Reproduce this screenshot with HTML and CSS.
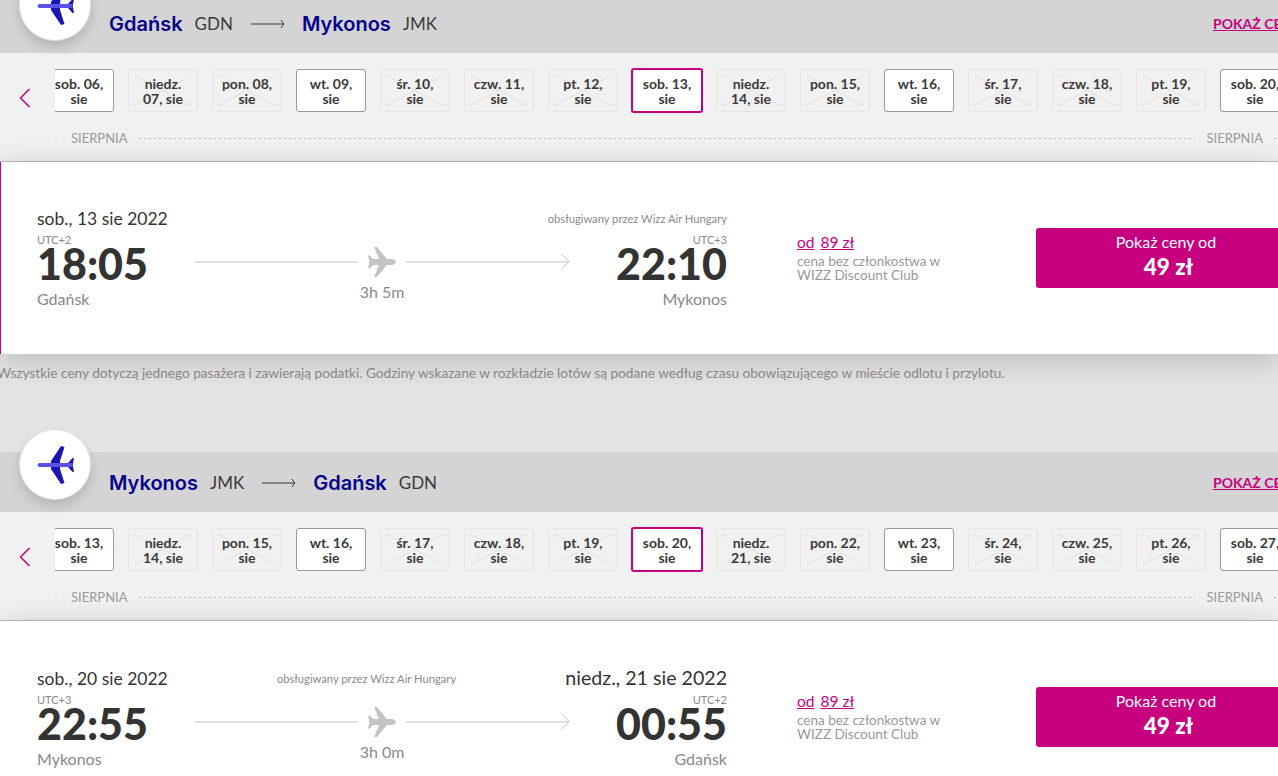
FILE: index.html
```html
<!DOCTYPE html>
<html lang="pl">
  <head>
    <meta charset="UTF-8" />
    <meta name="viewport" content="width=device-width, initial-scale=1.0" />
    <title>Wybierz lot</title>
    <link rel="stylesheet" href="styles.css">
  </head>
  <body>
    <main class="flight-list">
      <section class="flight-section flight-section-first">
        <header class="route-bar">
          <div class="route-logo">
            <svg width="38" height="38" viewBox="0 0 38 38">
              <path fill="#1c14b4" d="M15 15 L25 0 L28.500 1 L24 15 L24 23 L28.500 37 L25 38 L15 23 Z" />
              <path fill="#1c14b4" d="M32 17 L36.500 12 L38 12.500 L37 17 L37 21 L38 25.500 L36.500 26 L32 21 Z" />
              <path fill="#5a52e6" d="M3 17 Q0 19 3 21 L36 21 Q38 19 36 17 Z" />
            </svg>
          </div>
          <h2 class="route-title">
            <span class="route-city">Gdańsk</span><span class="route-code">GDN</span>
            <svg class="route-arrow" width="34" height="10" viewBox="0 0 34 10"><path d="M0 5 H33 M30 1 Q31 3 33 5 Q31 7 30 9" fill="none" stroke="#333" stroke-width="1" /></svg>
            <span class="route-city">Mykonos</span><span class="route-code">JMK</span>
          </h2>
          <a class="show-prices" href="#">POKAŻ CENY</a>
        </header>
        <div class="date-row">
          <button class="date-prev"><svg width="12" height="20" viewBox="0 0 12 20"><path d="M10.5 1 L1.5 10 L10.5 19" fill="none" stroke="#c6007e" stroke-width="1.5" /></svg></button>
          <div class="date-scroll">
            <div class="date-days">
              <a class="day">sob. 06,<br />sie</a>
              <a class="day day-off">niedz.<br />07, sie</a>
              <a class="day day-off">pon. 08,<br />sie</a>
              <a class="day">wt. 09,<br />sie</a>
              <a class="day day-off">śr. 10,<br />sie</a>
              <a class="day day-off">czw. 11,<br />sie</a>
              <a class="day day-off">pt. 12,<br />sie</a>
              <a class="day day-selected">sob. 13,<br />sie</a>
              <a class="day day-off">niedz.<br />14, sie</a>
              <a class="day day-off">pon. 15,<br />sie</a>
              <a class="day">wt. 16,<br />sie</a>
              <a class="day day-off">śr. 17,<br />sie</a>
              <a class="day day-off">czw. 18,<br />sie</a>
              <a class="day day-off">pt. 19,<br />sie</a>
              <a class="day">sob. 20,<br />sie</a>
            </div>
            <div class="month-row">
              <span class="month-dots month-dots-short"></span>
              <span class="month-name">SIERPNIA</span>
              <span class="month-dots"></span>
              <span class="month-name">SIERPNIA</span>
              <span class="month-dots month-dots-end"></span>
            </div>
          </div>
        </div>
        <article class="flight-card flight-card-active">
          <div class="flight-main">
            <div class="flight-top">
              <div class="flight-date">sob., 13 sie 2022</div>
              <div class="flight-operator">obsługiwany przez Wizz Air Hungary</div>
            </div>
            <div class="flight-times">
              <div class="flight-point">
                <div class="flight-utc">UTC+2</div>
                <div class="flight-time">18:05</div>
                <div class="flight-city">Gdańsk</div>
              </div>
              <div class="flight-route">
                <div class="route-line">
                  <span class="line"></span>
                  <svg width="28" height="30" viewBox="0 0 28 30"><path fill="#c4c4c4" d="M28 15 Q27 12 23 12 L19 12 L9 0 L6 0 L11 12 L5 12 L2 8.500 L0 8.500 L1.500 15 L0 21.500 L2 21.500 L5 18 L11 18 L6 30 L9 30 L19 18 L23 18 Q27 18 28 15 Z" /></svg>
                  <span class="line line-arrow"></span>
                </div>
                <div class="flight-duration">3h 5m</div>
              </div>
              <div class="flight-point flight-point-end">
                <div class="flight-utc">UTC+3</div>
                <div class="flight-time">22:10</div>
                <div class="flight-city">Mykonos</div>
              </div>
            </div>
          </div>
          <div class="flight-club">
            <div class="club-price"><a href="#">od</a> <a href="#">89 zł</a></div>
            <div class="club-note">cena bez członkostwa w<br />WIZZ Discount Club</div>
          </div>
          <a class="price-button" href="#">
            <span class="price-label">Pokaż ceny od</span>
            <strong class="price-value">49 zł</strong>
          </a>
        </article>
      </section>

      <p class="price-note">Wszystkie ceny dotyczą jednego pasażera i zawierają podatki. Godziny wskazane w rozkładzie lotów są podane według czasu obowiązującego w mieście odlotu i przylotu.</p>

      <section class="flight-section">
        <header class="route-bar">
          <div class="route-logo">
            <svg width="38" height="38" viewBox="0 0 38 38">
              <path fill="#1c14b4" d="M15 15 L25 0 L28.500 1 L24 15 L24 23 L28.500 37 L25 38 L15 23 Z" />
              <path fill="#1c14b4" d="M32 17 L36.500 12 L38 12.500 L37 17 L37 21 L38 25.500 L36.500 26 L32 21 Z" />
              <path fill="#5a52e6" d="M3 17 Q0 19 3 21 L36 21 Q38 19 36 17 Z" />
            </svg>
          </div>
          <h2 class="route-title">
            <span class="route-city">Mykonos</span><span class="route-code">JMK</span>
            <svg class="route-arrow" width="34" height="10" viewBox="0 0 34 10"><path d="M0 5 H33 M30 1 Q31 3 33 5 Q31 7 30 9" fill="none" stroke="#333" stroke-width="1" /></svg>
            <span class="route-city">Gdańsk</span><span class="route-code">GDN</span>
          </h2>
          <a class="show-prices" href="#">POKAŻ CENY</a>
        </header>
        <div class="date-row">
          <button class="date-prev"><svg width="12" height="20" viewBox="0 0 12 20"><path d="M10.5 1 L1.5 10 L10.5 19" fill="none" stroke="#c6007e" stroke-width="1.5" /></svg></button>
          <div class="date-scroll">
            <div class="date-days">
              <a class="day">sob. 13,<br />sie</a>
              <a class="day day-off">niedz.<br />14, sie</a>
              <a class="day day-off">pon. 15,<br />sie</a>
              <a class="day">wt. 16,<br />sie</a>
              <a class="day day-off">śr. 17,<br />sie</a>
              <a class="day day-off">czw. 18,<br />sie</a>
              <a class="day day-off">pt. 19,<br />sie</a>
              <a class="day day-selected">sob. 20,<br />sie</a>
              <a class="day day-off">niedz.<br />21, sie</a>
              <a class="day day-off">pon. 22,<br />sie</a>
              <a class="day">wt. 23,<br />sie</a>
              <a class="day day-off">śr. 24,<br />sie</a>
              <a class="day day-off">czw. 25,<br />sie</a>
              <a class="day day-off">pt. 26,<br />sie</a>
              <a class="day">sob. 27,<br />sie</a>
            </div>
            <div class="month-row">
              <span class="month-dots month-dots-short"></span>
              <span class="month-name">SIERPNIA</span>
              <span class="month-dots"></span>
              <span class="month-name">SIERPNIA</span>
              <span class="month-dots month-dots-end"></span>
            </div>
          </div>
        </div>
        <article class="flight-card">
          <div class="flight-main">
            <div class="flight-top">
              <div class="flight-date">sob., 20 sie 2022</div>
              <div class="flight-operator">obsługiwany przez Wizz Air Hungary</div>
              <div class="flight-date flight-date-next">niedz., 21 sie 2022</div>
            </div>
            <div class="flight-times">
              <div class="flight-point">
                <div class="flight-utc">UTC+3</div>
                <div class="flight-time">22:55</div>
                <div class="flight-city">Mykonos</div>
              </div>
              <div class="flight-route">
                <div class="route-line">
                  <span class="line"></span>
                  <svg width="28" height="30" viewBox="0 0 28 30"><path fill="#c4c4c4" d="M28 15 Q27 12 23 12 L19 12 L9 0 L6 0 L11 12 L5 12 L2 8.500 L0 8.500 L1.500 15 L0 21.500 L2 21.500 L5 18 L11 18 L6 30 L9 30 L19 18 L23 18 Q27 18 28 15 Z" /></svg>
                  <span class="line line-arrow"></span>
                </div>
                <div class="flight-duration">3h 0m</div>
              </div>
              <div class="flight-point flight-point-end">
                <div class="flight-utc">UTC+2</div>
                <div class="flight-time">00:55</div>
                <div class="flight-city">Gdańsk</div>
              </div>
            </div>
          </div>
          <div class="flight-club">
            <div class="club-price"><a href="#">od</a> <a href="#">89 zł</a></div>
            <div class="club-note">cena bez członkostwa w<br />WIZZ Discount Club</div>
          </div>
          <a class="price-button" href="#">
            <span class="price-label">Pokaż ceny od</span>
            <strong class="price-value">49 zł</strong>
          </a>
        </article>
      </section>
    </main>
  </body>
</html>
```

FILE: styles.css
```css
* {
  box-sizing: border-box;
}
html,
body {
  height: 100%;
  margin: 0;
  padding: 0;
  overflow: hidden;
  background-color: #e4e4e4;
  font-family: "Lato", "Noto Sans", sans-serif;
  color: #333;
}
.flight-list {
  width: 1278px;
  margin-top: -7px;
}
.flight-section {
  position: relative;
}

/* route header */
.route-bar {
  position: relative;
  display: flex;
  align-items: flex-end;
  height: 60px;
  padding-left: 109px;
  background-color: #d4d4d4;
}
.route-logo {
  position: absolute;
  top: -23px;
  left: 19px;
  display: flex;
  align-items: center;
  justify-content: center;
  width: 72px;
  height: 71px;
  border-radius: 50%;
  background-color: #fff;
  border: 1px solid #e2e2e2;
  box-shadow: 0 6px 12px rgba(0, 0, 0, 0.15);
}
.route-title {
  display: flex;
  align-items: center;
  height: 29px;
  margin: 0 0 15px;
  font-weight: normal;
}
.route-city {
  color: #06038d;
  font-family: "Inter", "Lato", sans-serif;
  font-size: 20px;
  font-weight: 600;
}
.route-code {
  margin-left: 12px;
  font-size: 17px;
  color: #3a3a3a;
}
.route-arrow {
  margin: 0 17px 0 18px;
}
.show-prices {
  position: absolute;
  top: 22px;
  left: 1213px;
  color: #c6007e;
  font-size: 14px;
  font-weight: 700;
  white-space: nowrap;
}

/* date strip */
.date-row {
  display: flex;
  height: 109px;
  background-color: #f1f1f1;
  border-bottom: 1px solid #bdbdbd;
}
.date-prev {
  flex: 0 0 55px;
  height: 70px;
  padding: 0 0 0 19px;
  border: none;
  background: none;
  text-align: left;
  margin-top: 11px;
}
.date-scroll {
  flex: 1;
  overflow: hidden;
}
.date-days {
  display: flex;
  gap: 14px;
  margin: 16px 0 0 -11px;
}
.day {
  flex: 0 0 70px;
  height: 43px;
  padding-top: 6px;
  border: 1px solid #999;
  border-radius: 3px;
  background-color: #fff;
  font-size: 14px;
  font-weight: 700;
  line-height: 15px;
  text-align: center;
  color: #3a3a3a;
}
.day-off {
  border-color: #e4e4e4;
  background-color: transparent;
  background-image:
    linear-gradient(to top right, transparent calc(50% - 1px), #e2e2e2, transparent calc(50% + 1px)),
    linear-gradient(to bottom right, transparent calc(50% - 1px), #e2e2e2, transparent calc(50% + 1px));
  background-size: calc(100% - 10px) calc(100% - 10px);
  background-position: center;
  background-repeat: no-repeat;
}
.day-selected {
  flex-basis: 72px;
  height: 45px;
  margin: -1px;
  border: 2px solid #c6007e;
}
.month-row {
  display: flex;
  align-items: center;
  gap: 11px;
  height: 20px;
  margin-top: 16px;
}
.month-name {
  font-size: 13px;
  color: #9a9a9a;
}
.month-dots {
  flex: 1;
  height: 1px;
  background-image: repeating-linear-gradient(to right, #bbb 0 2px, transparent 2px 5px);
}
.month-dots-short {
  flex: 0 0 5px;
}
.month-dots-end {
  flex: 0 0 4px;
}

/* flight card */
.flight-card {
  display: flex;
  align-items: flex-start;
  height: 192px;
  padding-left: 37px;
  background-color: #fff;
  box-shadow: 0 6px 30px rgba(0, 0, 0, 0.2);
}
.flight-card-active {
  padding-left: 36px;
  border-left: 1px solid #c6007e;
}
.flight-main {
  flex: 0 0 690px;
  padding-top: 45px;
}
.flight-top {
  display: flex;
  align-items: center;
  justify-content: space-between;
  min-height: 23px;
}
.flight-date {
  font-size: 17.500px;
}
.flight-date-next {
  font-size: 19.600px;
  line-height: 24px;
}
.flight-operator {
  font-size: 11.200px;
  color: #8a8a8a;
}
.flight-times {
  display: flex;
}
.flight-point {
  flex: 0 0 158px;
  margin-top: 5px;
}
.flight-point-end {
  text-align: right;
}
.flight-utc {
  height: 10px;
  font-size: 11px;
  line-height: 10px;
  color: #8a8a8a;
}
.flight-time {
  height: 38px;
  font-size: 43px;
  font-weight: 900;
  line-height: 38px;
  color: #333;
}
.flight-city {
  margin-top: 6px;
  font-size: 16px;
  line-height: 20px;
  color: #888;
}
.flight-route {
  flex: 1;
  text-align: center;
}
.route-line {
  display: flex;
  align-items: center;
  gap: 10px;
  height: 30px;
  margin-top: 17px;
}
.line {
  flex: 1;
  height: 2px;
  background-color: #e0e0e0;
}
.line-arrow {
  position: relative;
}
.line-arrow::after {
  content: "";
  position: absolute;
  top: -6px;
  right: 1px;
  width: 12px;
  height: 12px;
  border-top: 1px solid #d0d0d0;
  border-right: 1px solid #d0d0d0;
  transform: rotate(45deg) scale(0.9);
}
.flight-duration {
  margin-top: 5px;
  font-size: 16px;
  line-height: 20px;
  color: #8a8a8a;
}
.flight-club {
  flex: 0 0 309px;
  padding: 70px 0 0 70px;
  white-space: nowrap;
}
.club-price {
  font-size: 15.500px;
  line-height: 20px;
}
.club-price a {
  color: #c6007e;
  margin-right: 2px;
}
.club-note {
  margin-top: 2px;
  font-size: 13.500px;
  line-height: 14px;
  color: #999;
}
.price-button {
  display: flex;
  flex: 0 0 260px;
  flex-direction: column;
  align-items: center;
  height: 60px;
  margin-top: 66px;
  padding-top: 4px;
  border-radius: 3px;
  background-color: #c6007e;
  color: #fff;
  text-decoration: none;
}
.price-label {
  font-size: 16px;
  line-height: 20px;
}
.price-value {
  padding-left: 5px;
  font-size: 22.500px;
  font-weight: 900;
  line-height: 30px;
}

.price-note {
  height: 98px;
  margin: 0 0 0 -3px;
  padding-top: 10px;
  font-size: 13.630px;
  line-height: 18px;
  color: #8c8c8c;
}
```
